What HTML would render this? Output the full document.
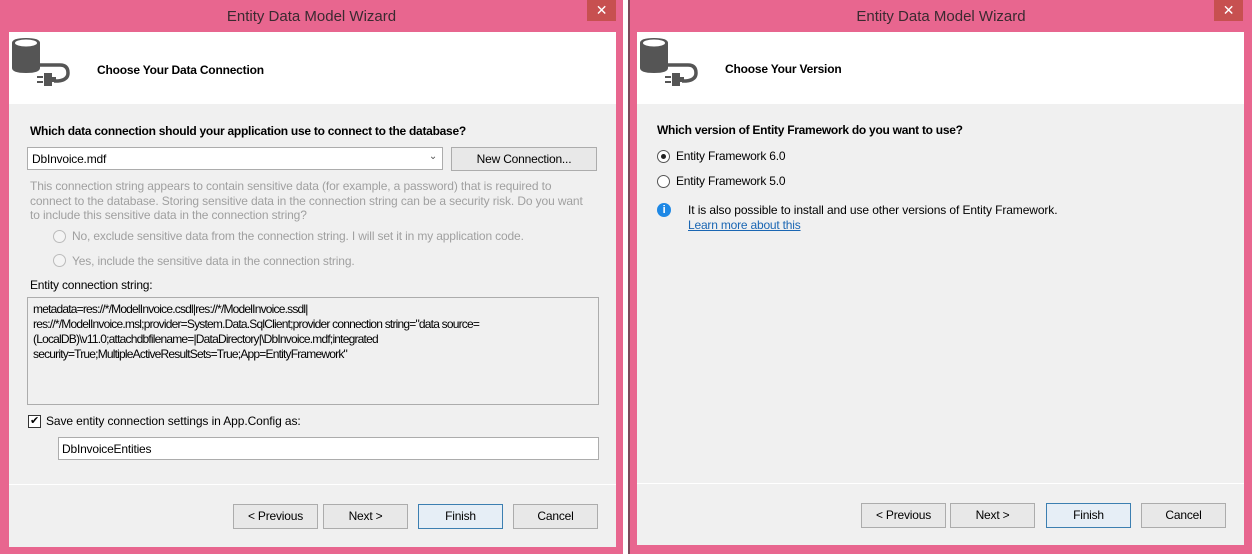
<!DOCTYPE html>
<html><head><style>
*{margin:0;padding:0;box-sizing:border-box}
body{width:1252px;height:555px;background:#fff;position:relative;overflow:hidden;font-family:"Liberation Sans",sans-serif;font-size:12px;color:#000;letter-spacing:-0.2px}
.win{position:absolute;background:#e8668f}
.title{position:absolute;top:8px;left:0;right:0;text-align:center;font-size:15px;color:#3a2a30;letter-spacing:0}
.close{position:absolute;top:0;width:29px;height:21px;background:#c75050;color:#fff;text-align:center;font-size:14px;line-height:21px}
.hdr{position:absolute;background:#fff}
.body{position:absolute;background:#f0f0f0}
.b{position:absolute}
.btn{position:absolute;height:25px;width:85px;border:1px solid #acacac;background:#e8e8e8;text-align:center;line-height:23px;font-size:12px}
.btn.f{border-color:#3c7fb1;background:#e6eef6}
.grey{color:#a0a0a0}
.rad{position:absolute;width:13px;height:13px;border:1px solid #555;border-radius:50%;background:#fff}
.rad.d{border-color:#bbb;background:#f4f4f4}
</style></head><body>

<div class="win" style="left:0;top:0;width:623px;height:554px">
 <div class="title">Entity Data Model Wizard</div>
 <div class="close" style="left:587px">✕</div>
 <div class="hdr" style="left:9px;top:32px;width:607px;height:72px"></div>
 <div class="body" style="left:9px;top:104px;width:607px;height:443px"></div>
</div>
<div class="win" style="left:628px;top:0;width:624px;height:554px;border-left:2px solid #7a4a5a">
 <div class="title">Entity Data Model Wizard</div>
 <div class="close" style="left:584px">✕</div>
 <div class="hdr" style="left:7px;top:32px;width:607px;height:72px"></div>
 <div class="body" style="left:7px;top:104px;width:607px;height:441px"></div>
</div>

<svg class="b" style="left:10px;top:35px" width="60" height="55" viewBox="0 0 60 55">
 <path d="M2 8 Q2 3 16 3 Q30 3 30 8 L30 33 Q30 38 16 38 Q2 38 2 33Z" fill="#555"/>
 <ellipse cx="16" cy="8" rx="11" ry="3.5" fill="#fff"/>
 <path d="M30 30 L50 30 Q58 30 58 38 Q58 45 48 46 L44 46" fill="none" stroke="#555" stroke-width="3.5"/>
 <rect x="34" y="38" width="8" height="13" fill="#555"/>
 <rect x="42" y="42" width="4" height="5" fill="#555"/>
 <rect x="27" y="41" width="6" height="2" fill="#555"/><rect x="27" y="46" width="6" height="2" fill="#555"/>
</svg>
<svg class="b" style="left:638px;top:35px" width="60" height="55" viewBox="0 0 60 55">
 <path d="M2 8 Q2 3 16 3 Q30 3 30 8 L30 33 Q30 38 16 38 Q2 38 2 33Z" fill="#555"/>
 <ellipse cx="16" cy="8" rx="11" ry="3.5" fill="#fff"/>
 <path d="M30 30 L50 30 Q58 30 58 38 Q58 45 48 46 L44 46" fill="none" stroke="#555" stroke-width="3.5"/>
 <rect x="34" y="38" width="8" height="13" fill="#555"/>
 <rect x="42" y="42" width="4" height="5" fill="#555"/>
 <rect x="27" y="41" width="6" height="2" fill="#555"/><rect x="27" y="46" width="6" height="2" fill="#555"/>
</svg>

<div class="b" style="left:97px;top:63px;font-weight:bold">Choose Your Data Connection</div>
<div class="b" style="left:30px;top:124px;font-weight:bold;letter-spacing:-0.27px">Which data connection should your application use to connect to the database?</div>
<div class="b" style="left:27px;top:147px;width:416px;height:23px;border:1px solid #acacac;background:#fff;padding:4px 4px;">DbInvoice.mdf<span style="position:absolute;right:5px;top:3px;font-size:10px;color:#555">⌄</span></div>
<div class="btn" style="left:451px;top:147px;width:146px;height:24px">New Connection...</div>
<div class="b grey" style="left:30px;top:179px;width:580px;line-height:14.5px;letter-spacing:-0.12px;white-space:nowrap">This connection string appears to contain sensitive data (for example, a password) that is required to<br>connect to the database. Storing sensitive data in the connection string can be a security risk. Do you want<br>to include this sensitive data in the connection string?</div>
<div class="rad d" style="left:53px;top:230px"></div><div class="b grey" style="left:72px;top:229px;letter-spacing:-0.15px">No, exclude sensitive data from the connection string. I will set it in my application code.</div>
<div class="rad d" style="left:53px;top:254px"></div><div class="b grey" style="left:72px;top:254px;letter-spacing:-0.15px">Yes, include the sensitive data in the connection string.</div>
<div class="b" style="left:30px;top:278px">Entity connection string:</div>
<div class="b" style="left:27px;top:297px;width:572px;height:108px;border:1px solid #acacac;background:#f0f0f0;padding:4px 24px 0 5px;line-height:15px;letter-spacing:-0.8px;white-space:nowrap">metadata=res://*/ModelInvoice.csdl|res://*/ModelInvoice.ssdl|<br>res://*/ModelInvoice.msl;provider=System.Data.SqlClient;provider connection string="data source=<br>(LocalDB)\v11.0;attachdbfilename=|DataDirectory|\DbInvoice.mdf;integrated<br>security=True;MultipleActiveResultSets=True;App=EntityFramework"</div>
<div class="b" style="left:28px;top:415px;width:13px;height:13px;border:1px solid #333;background:#fff;font-size:11px;line-height:11px;text-align:center">✔</div>
<div class="b" style="left:46px;top:414px;letter-spacing:-0.1px">Save entity connection settings in App.Config as:</div>
<div class="b" style="left:58px;top:437px;width:541px;height:23px;border:1px solid #acacac;background:#fff;padding:4px 3px">DbInvoiceEntities</div>
<div class="b" style="left:9px;top:484px;width:607px;height:1px;background:#fff"></div>
<div class="btn" style="left:233px;top:504px">&lt; Previous</div>
<div class="btn" style="left:323px;top:504px">Next &gt;</div>
<div class="btn f" style="left:418px;top:504px">Finish</div>
<div class="btn" style="left:513px;top:504px">Cancel</div>

<div class="b" style="left:725px;top:62px;font-weight:bold">Choose Your Version</div>
<div class="b" style="left:657px;top:123px;font-weight:bold;letter-spacing:-0.27px">Which version of Entity Framework do you want to use?</div>
<div class="rad" style="left:657px;top:150px"><div style="position:absolute;left:3px;top:3px;width:5px;height:5px;border-radius:50%;background:#222"></div></div>
<div class="b" style="left:676px;top:149px">Entity Framework 6.0</div>
<div class="rad" style="left:657px;top:175px"></div>
<div class="b" style="left:676px;top:174px">Entity Framework 5.0</div>
<div class="b" style="left:657px;top:203px;width:14px;height:14px;border-radius:50%;background:#1e88e5;color:#fff;font-weight:bold;font-size:11px;text-align:center;line-height:14px">i</div>
<div class="b" style="left:688px;top:203px;letter-spacing:-0.1px">It is also possible to install and use other versions of Entity Framework.</div>
<div class="b" style="left:688px;top:218px;color:#1a66b3;text-decoration:underline">Learn more about this</div>
<div class="b" style="left:637px;top:483px;width:607px;height:1px;background:#fff"></div>
<div class="btn" style="left:861px;top:503px">&lt; Previous</div>
<div class="btn" style="left:950px;top:503px">Next &gt;</div>
<div class="btn f" style="left:1046px;top:503px">Finish</div>
<div class="btn" style="left:1141px;top:503px">Cancel</div>
</body></html>
